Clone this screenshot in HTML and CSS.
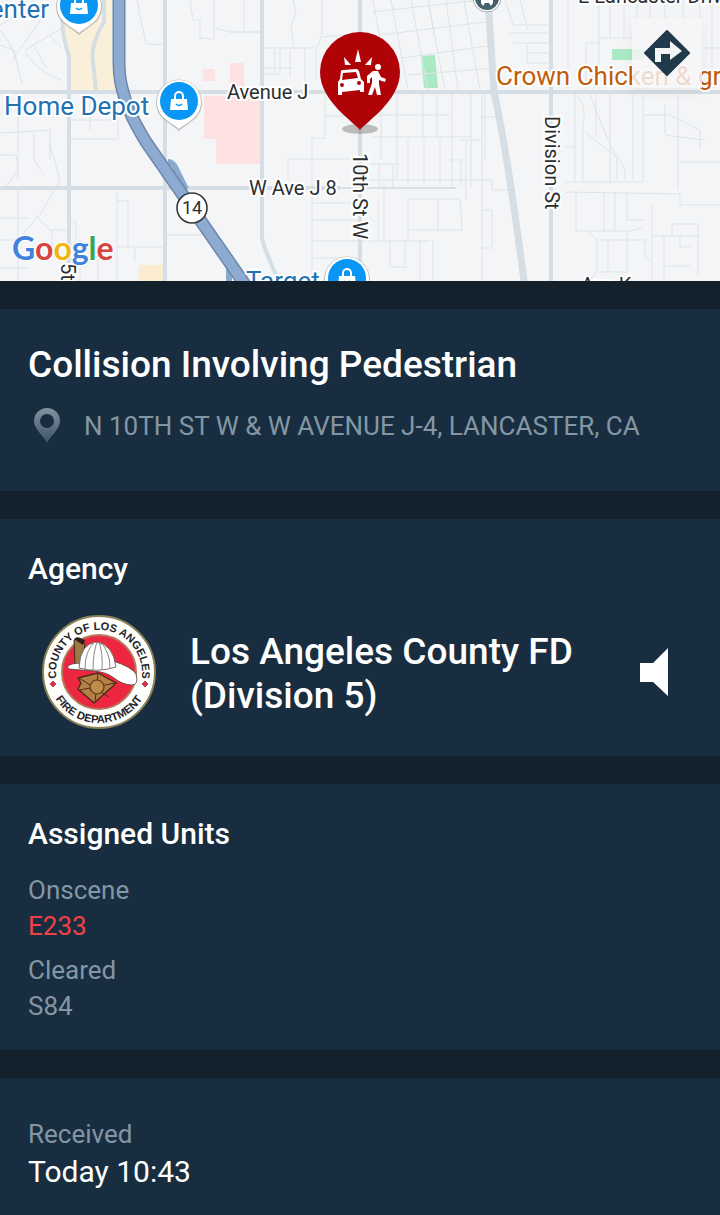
FILE: index.html
```html
<!DOCTYPE html>
<html lang="en">
<head>
    <meta charset="UTF-8">
    <meta name="viewport" content="width=device-width, initial-scale=1.0">
    <title>Collision Involving Pedestrian</title>
    <link rel="stylesheet" href="styles.css">
</head>
<body>
    <header class="map">
        <svg class="map-canvas" viewBox="0 0 720 281" preserveAspectRatio="xMidYMid slice" role="img" aria-label="Map of the incident">
            <defs>
                <g id="bag">
                    <path d="M0 29C-4 25-11 21-17 16A23 23 0 1 1 17 16C11 21 4 25 0 29Z" fill="#8c9196" opacity=".55"/>
                    <path d="M0 27C-3 24-11 20-16 15A22 22 0 1 1 16 15C11 20 3 24 0 27Z" fill="#fff"/>
                    <circle r="19" cy="-1" fill="#0a96f5"/>
                    <path d="M-8-3H8L9 8H-9Z" fill="#fff"/>
                    <path d="M-4-2V-6a4 4 0 0 1 8 0V-2" fill="none" stroke="#fff" stroke-width="2"/>
                    <path d="M-3 2q3 3 6 0" fill="none" stroke="#0a96f5" stroke-width="1.6"/>
                </g>
            </defs>
            <rect width="720" height="281" fill="#f4f5f6"/>

            <!-- land areas -->
            <path d="M65 0H112V60L116 90H71V60L63 40Z" fill="#faf0d9"/>
            <path d="M203 69h12v12h-12zM230 63h14v33h-14zM204 96h56v68h-44v-25h-12z" fill="#fde2e1"/>
            <path d="M421 56l14-1 3 33h-14z" fill="#a9eac5"/>
            <path d="M612 49h32v11h-32z" fill="#a9eac5"/>
            <path d="M139 265h24v16h-24z" fill="#fbecd0"/>

            <!-- side streets -->
            <g class="street">
                <path d="M0 25L18 15L34 0M0 45L14 50L22 84M25 50L62 28M12 60Q28 38 42 18M26 52Q36 72 62 80M34 45L46 68M50 36L62 48M0 30Q12 44 16 60"/>
                <path d="M137 0L146 44L166 45M190 0L193 20L200 20V38L214 39V0M214 28L230 32H260M118 91V139H67M67 120H118M90 91V130M0 133L50 130V150M18 91V180M34 133V160L44 175M0 155H16L18 170L6 187M50 145L60 180L40 215L22 235M50 137V160"/>
                <path d="M18 187V281M0 218H30M36 216L50 230H67M52 230V250M0 240H30M117 192V281M128 201V247M117 201H128M117 247H166M135 248V262M80 240V281M67 222H76V240M98 247V281M166 235H203M0 268H30"/>
                <path d="M293 0L296 12L291 26L294 48M322 0V35L316 50V80M264 48H315M264 74H280V48M275 50V75M290 50V78M305 48V90M264 68H293M230 32H264M244 0V32M322 37L360 34"/>
                <path d="M325 116H360M325 92V138H312V165M288 159H360M288 159V180M312 170V273M312 203H360M312 220H360M312 241H430M312 258H360M360 180H460M384 181V240M408 199V241M438 199V231M408 199H460L462 230H408"/>
                <path d="M373 0L389 90M391 0L408 90M411 0L428 90M428 0L445 90M446 0L458 90M372 12L480 0M380 35L485 22M402 58L495 45M408 75L496 68M430 9L434 35M464 0L480 90"/>
                <path d="M381 93V160M397 93V180M423 93V137M437 93V137M452 93V186M471 93V187M485 93V160M371 115H450M371 137H470M379 164V187M393 164V187M408 140V187M424 140V187M440 140V187M450 160H461V186M371 164H400M378 200V240M433 241V281M390 241V267H408M405 241V267M420 241V281"/>
                <path d="M505 0L513 25H551M510 33H551M513 43H551M527 53H551M527 63H551M527 43V63M520 0L528 30M480 117H501M482 93V280M460 140H482M460 180H492V190H511M482 210H492V248H482M466 140V200"/>
                <path d="M568 0V89M586 43V89M599 0V89M610 0V38M624 0V38M637 0V30M650 0V20M665 0V20M683 0V30M700 0V89M712 0V89M586 43H600M600 38H640M700 48H720"/>
                <path d="M573 93Q588 100 583 125V182M596 93V135M610 93V183M590 93Q598 120 617 158M565 147H575M575 93V182M565 182H643V93M585 132L620 160L625 170V180M633 93V180M643 115H670L700 130V150M665 105L665 135L705 140M678 93V145M678 162H720M678 145V190M617 158L617 180M565 192L680 194V205H720M576 192V231H630L642 228M604 192V231M615 192V231M627 192V220H646M652 205V281M588 231L597 240H645V258L650 260M597 240V270L590 281M627 231V272H597M608 240V270M664 236V281M652 236H700M672 236V224H698V275M680 236V247H690M663 266H690"/>
            </g>

            <!-- main roads -->
            <g class="road">
                <path d="M0 92H720M0 188H340M165 0V281M64 0Q59 28 69 56V281M104 0V22Q90 45 93 62L96 90M262 0V238Q265 252 279 281M360 0V281M551 0V281"/>
                <path d="M488 0L494 92Q507 150 524 281" stroke-width="7"/>
            </g>
            <path d="M340 188H456" stroke="#d9e0e5" stroke-width="2"/>
            <path d="M168 162q5 0 8 7l10 20" class="ramp"/>
            <path d="M229 255V281" class="ramp"/>
            <path d="M119-5V62C119 80 122 88 126 102C130 115 137 127 146 142L246 286" class="freeway-edge"/>
            <path d="M119-5V62C119 80 122 88 126 102C130 115 137 127 146 142L246 286" class="freeway"/>

            <!-- highway shield -->
            <circle cx="192" cy="208" r="15" fill="#fff" stroke="#363a3d" stroke-width="1.6"/>
            <text x="192" y="214" class="label shield" text-anchor="middle">14</text>

            <!-- street and place names -->
            <text x="227" y="99" class="label">Avenue J</text>
            <text x="249" y="195" class="label">W Ave J 8</text>
            <text x="578" y="3" class="label">E Lancaster Drive</text>
            <text x="581" y="292" class="label">Ave K</text>
            <text transform="translate(353 153) rotate(90)" class="label">10th St W</text>
            <text transform="translate(545 116) rotate(90)" class="label">Division St</text>
            <text transform="translate(61 263) rotate(90)" class="label">5th St W</text>
            <text x="49" y="18" class="label shop" text-anchor="end">Center</text>
            <text x="4" y="115" class="label shop">Home Depot</text>
            <text x="246" y="290" class="label shop">Target</text>
            <text x="496" y="85" class="label food">Crown Chicken &amp; grill</text>

            <use href="#bag" x="79" y="6"/>
            <use href="#bag" x="179" y="102"/>
            <use href="#bag" x="347" y="279"/>

            <circle cx="487" cy="-2" r="14" fill="#fff" stroke="#a7adb2"/>
            <circle cx="487" cy="-2" r="12" fill="#45606b"/>
            <path d="M481-4H493V3L491 6L489 3H485L483 6L481 3Z" fill="#fff"/>

            <!-- incident pin -->
            <ellipse cx="360" cy="129" rx="18" ry="5" fill="#777" opacity=".45"/>
            <path d="M360 130C354 122 320 101 320 72A40 40 0 1 1 400 72C400 101 366 122 360 130Z" fill="#b00308"/>
            <g fill="#fff">
                <path d="M355 62L358 49L361 62ZM344 57L351 65L345 65ZM372 57L371 65L365 65Z"/>
                <path fill-rule="evenodd" d="M341 71Q341 70 343 70L356 69Q358 69 359 71L361 79L364 82V92H360V90L342 92V95H338V82L340 79ZM343 73L342 80L358 78L356 72ZM342 83a2 2 0 1 0 0 4 2 2 0 0 0 0-4zM359 81a2 2 0 1 0 0 4 2 2 0 0 0 0-4z"/>
                <circle cx="378" cy="67" r="3"/>
                <path d="M373 71H378L381 77L386 79L385 82L379 80V84L381 95H377L375 87L372 95H368L372 83V77L370 79V83H367V76Z"/>
            </g>

            <text x="12" y="260" class="google"><tspan fill="#4083dc">G</tspan><tspan fill="#d8453f">o</tspan><tspan fill="#f0b50f">o</tspan><tspan fill="#4083dc">g</tspan><tspan fill="#35a457">l</tspan><tspan fill="#d8453f">e</tspan></text>
        </svg>
        <button class="directions" aria-label="Directions">
            <svg width="48" height="48" viewBox="0 0 48 48">
                <path d="M24 2L46 24L24 46L2 24Z" fill="#20394b" stroke="#20394b" stroke-width="2" stroke-linejoin="round"/>
                <path d="M12 33V19H27V12L39 22L27 31V25H18V33Z" fill="#f3f4f5"/>
            </svg>
        </button>
    </header>

    <main class="cards">
        <section class="card incident">
            <h1>Collision Involving Pedestrian</h1>
            <p class="address">
                <svg class="address-icon" width="26" height="36" viewBox="0 0 26 36">
                    <defs>
                        <linearGradient id="pinFade" x1="0" y1="0" x2="0" y2="1">
                            <stop offset="0" stop-color="#8492a0"/>
                            <stop offset="1" stop-color="#3d5265"/>
                        </linearGradient>
                    </defs>
                    <path fill="url(#pinFade)" fill-rule="evenodd" d="M13 0A13 13 0 0 0 0 13C0 21 9 27 13 35C17 27 26 21 26 13A13 13 0 0 0 13 0ZM13 6A7 7 0 1 1 13 20A7 7 0 1 1 13 6Z"/>
                </svg>
                <span>N 10TH ST W &amp; W AVENUE J-4, LANCASTER, CA</span>
            </p>
        </section>

        <section class="card agency">
            <h2>Agency</h2>
            <div class="agency-row">
                <svg class="seal" width="116" height="116" viewBox="0 0 116 116" role="img" aria-label="County of Los Angeles Fire Department">
                    <defs>
                        <path id="sealTop" d="M16 68A43 43 0 1 1 100 68"/>
                        <path id="sealBottom" d="M7 58A51 51 0 0 0 109 58"/>
                    </defs>
                    <circle cx="58" cy="58" r="56" fill="#fefefa" stroke="#8b8058" stroke-width="2"/>
                    <circle cx="58" cy="58" r="37" fill="#ee2740" stroke="#b3785a" stroke-width="2"/>
                    <text class="seal-text"><textPath href="#sealTop" startOffset="50%" text-anchor="middle">COUNTY OF LOS ANGELES</textPath></text>
                    <text class="seal-text"><textPath href="#sealBottom" startOffset="50%" text-anchor="middle">FIRE DEPARTMENT</textPath></text>
                    <path d="M12 67l3 3-3 3-3-3zM104 67l3 3-3 3-3-3z" fill="#cf3550" stroke="#cf3550"/>
                    <path d="M33 26L39 24L44 30L40 54L34 52Z" fill="#9b7a43" stroke="#3a2a1c"/>
                    <path d="M33 25L36 23L44 26L42 31Z" fill="#2a211c"/>
                    <path d="M27 52Q30 49 42 49L72 47Q91 53 95 60Q98 71 91 71Q82 71 73 64Q66 58 52 57L28 55Q26 54 27 52Z" fill="#fff" stroke="#5b3a35" stroke-width=".8"/>
                    <path d="M38 54Q39 30 55 28Q72 30 75 53Q56 59 38 54Z" fill="#fff" stroke="#5b4a45" stroke-width=".8"/>
                    <path d="M54 28Q44 36 44 55M56 28Q52 39 52 56M58 28Q62 39 61 56M59 28Q69 37 69 54" fill="none" stroke="#8f8784"/>
                    <path d="M37 64L57 59L75 69L71 73L53 89L37 75L40 69Z" fill="#b48045" stroke="#4e2b19" stroke-width="1.4"/>
                    <path d="M38 64L68 83M74 69L39 76M57 59L54 88" stroke="#4e2b19" fill="none"/>
                    <circle cx="56" cy="73" r="7" fill="#bd8b4c" stroke="#5e381e" stroke-width="1.2"/>
                </svg>
                <p class="agency-name">Los Angeles County FD (Division 5)</p>
                <button class="speaker" aria-label="Listen">
                    <svg width="28" height="48" viewBox="0 0 28 48"><path d="M0 15H13L28 0V48L13 34H0Z" fill="#fff"/></svg>
                </button>
            </div>
        </section>

        <section class="card units">
            <h2>Assigned Units</h2>
            <dl>
                <dt>Onscene</dt>
                <dd class="onscene">E233</dd>
                <dt>Cleared</dt>
                <dd>S84</dd>
            </dl>
        </section>

        <section class="card received">
            <p class="caption">Received</p>
            <p class="time">Today 10:43</p>
        </section>
    </main>
</body>
</html>
```

FILE: styles.css
```css
*{
    margin: 0;
    padding: 0;
    box-sizing: border-box;
}
body{
    min-height: 100vh;
    display: flex;
    flex-direction: column;
    background-color: #13212d;
    color: white;
    font-family: Roboto, "Noto Sans", sans-serif;
}
button{
    border: none;
    background: none;
    cursor: pointer;
}
svg{
    display: block;
}

/* map */
.map{
    position: relative;
    height: 281px;
    overflow: hidden;
}
.map-canvas{
    width: 100%;
    height: 100%;
}
.street{
    fill: none;
    stroke: #dfe3e8;
    stroke-width: 1;
}
.road{
    fill: none;
    stroke: #d5dee5;
    stroke-width: 4;
}
.ramp{
    fill: none;
    stroke: #8ba9cd;
    stroke-width: 6;
}
.freeway-edge{
    fill: none;
    stroke: #6c87ab;
    stroke-width: 13;
}
.freeway{
    fill: none;
    stroke: #8dabd0;
    stroke-width: 10;
}
.label{
    font-size: 20px;
    fill: #2b2e31;
    stroke: #fff;
    stroke-width: 4px;
    stroke-linejoin: round;
    paint-order: stroke;
}
.shield{
    font-size: 18px;
}
.shop{
    font-size: 26px;
    fill: #2272b4;
}
.food{
    font-size: 26px;
    fill: #c05c0c;
}
.google{
    font-family: Lato, sans-serif;
    font-size: 32px;
    font-weight: 700;
    stroke: #fff;
    stroke-width: 2px;
    paint-order: stroke;
}
.directions{
    position: absolute;
    top: 18px;
    right: 18px;
    width: 70px;
    height: 70px;
    display: flex;
    align-items: center;
    justify-content: center;
    background-color: rgba(247, 247, 248, 0.82);
    box-shadow: 0 4px 12px rgba(0, 0, 0, 0.06);
}

/* cards */
.cards{
    flex: 1;
    display: flex;
    flex-direction: column;
    gap: 28px;
    padding-top: 28px;
}
.card{
    padding: 32px 28px;
    background-color: #182e40;
}
h1{
    font-size: 37px;
    font-weight: 500;
    line-height: 48px;
}
h2{
    font-size: 30px;
    font-weight: 500;
    line-height: 36px;
}
.incident{
    padding-bottom: 47px;
}
.address{
    display: flex;
    align-items: center;
    gap: 24px;
    padding: 19px 6px 0;
    color: #8496a4;
    font-size: 26px;
    line-height: 36px;
}
.address-icon{
    flex: none;
}
.agency{
    padding-bottom: 26px;
}
.agency-row{
    display: flex;
    align-items: center;
    margin-top: 27px;
    padding: 0 24px 0 13px;
}
.seal{
    flex: none;
    margin-right: 33px;
}
.seal-text{
    font-family: "Liberation Sans", Arial, sans-serif;
    font-size: 11px;
    font-weight: 700;
    fill: #25222a;
}
.agency-name{
    flex: 1;
    padding-top: 4px;
    font-size: 37px;
    font-weight: 500;
    line-height: 44px;
}
.speaker{
    flex: none;
}
dl{
    margin-top: 20px;
    color: #8496a4;
    font-size: 26px;
    line-height: 36px;
}
dd + dt{
    margin-top: 8px;
}
.units{
    padding-bottom: 26px;
}
.onscene{
    color: #f14146;
}
.received{
    flex: 1;
    padding-top: 38px;
}
.caption{
    color: #8496a4;
    font-size: 26px;
    line-height: 36px;
}
.time{
    font-size: 30px;
    line-height: 40px;
}
```
